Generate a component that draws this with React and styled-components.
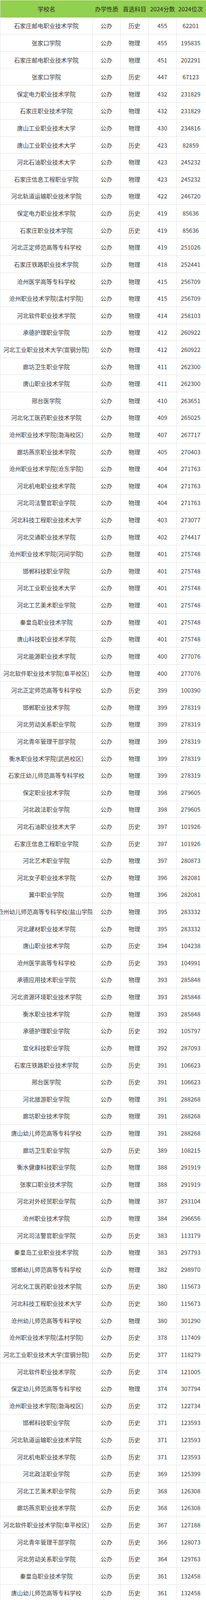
import React from 'react';
import styled, { createGlobalStyle } from 'styled-components';

const GlobalStyle = createGlobalStyle`
  html, body {
    margin: 0;
    padding: 0;
    background: #fff;
  }
  body {
    font-family: "Noto Sans CJK SC", "Microsoft YaHei", "Noto Sans", sans-serif;
    color: #333;
  }
`;

// 学校名|首选科目|分数|位次  (办学性质 均为公办)
const rows = `石家庄邮电职业技术学院|历史|455|62201
张家口学院|物理|455|195835
石家庄邮电职业技术学院|物理|451|202291
张家口学院|历史|447|67123
保定电力职业技术学院|物理|432|231829
石家庄职业技术学院|物理|432|231829
唐山工业职业技术大学|物理|430|234816
唐山工业职业技术大学|历史|423|82859
河北石油职业技术大学|物理|423|245232
石家庄信息工程职业学院|物理|423|245232
河北轨道运输职业技术学院|物理|422|246720
保定电力职业技术学院|历史|419|85636
石家庄职业技术学院|历史|419|85636
河北正定师范高等专科学校|物理|419|251026
石家庄铁路职业技术学院|物理|418|252441
沧州医学高等专科学校|物理|415|256709
沧州职业技术学院(孟村学院)|物理|415|256709
河北软件职业技术学院|物理|414|258103
承德护理职业学院|物理|412|260922
河北工业职业技术大学(宣钢分院)|物理|412|260922
廊坊卫生职业学院|物理|411|262300
唐山职业技术学院|物理|411|262300
邢台医学院|物理|410|263651
河北化工医药职业技术学院|物理|409|265025
沧州职业技术学院(渤海校区)|物理|407|267717
廊坊燕京职业技术学院|物理|405|270403
沧州职业技术学院(沧东学院)|物理|404|271763
河北机电职业技术学院|物理|404|271763
河北司法警官职业学院|物理|404|271763
河北科技工程职业技术大学|物理|403|273077
河北交通职业技术学院|物理|402|274417
沧州职业技术学院(河间学院)|物理|401|275748
邯郸科技职业学院|物理|401|275748
河北工业职业技术大学|物理|401|275748
河北工艺美术职业学院|物理|401|275748
秦皇岛职业技术学院|物理|401|275748
唐山科技职业技术学院|物理|401|275748
河北能源职业技术学院|物理|400|277076
河北软件职业技术学院(阜平校区)|物理|400|277076
河北正定师范高等专科学校|历史|399|100390
邯郸职业技术学院|物理|399|278319
河北劳动关系职业学院|物理|399|278319
河北青年管理干部学院|物理|399|278319
衡水职业技术学院(武邑校区)|物理|399|278319
石家庄幼儿师范高等专科学校|物理|399|278319
保定职业技术学院|物理|398|279605
河北政法职业学院|物理|398|279605
河北石油职业技术大学|历史|397|101926
石家庄信息工程职业学院|历史|397|101926
河北艺术职业学院|物理|397|280873
河北女子职业技术学院|物理|396|282081
冀中职业学院|物理|396|282081
沧州幼儿师范高等专科学校(盐山学院)|物理|395|283332
河北建材职业技术学院|物理|395|283332
唐山职业技术学院|历史|394|104238
沧州医学高等专科学校|历史|393|104991
承德应用技术职业学院|物理|393|285848
河北资源环境职业技术学院|物理|393|285848
衡水职业技术学院|物理|393|285848
承德护理职业学院|历史|392|105797
宣化科技职业学院|物理|392|287093
石家庄铁路职业技术学院|历史|391|106623
邢台医学院|历史|391|106623
河北旅游职业学院|物理|391|288268
廊坊职业技术学院|物理|391|288268
唐山幼儿师范高等专科学校|物理|391|288268
廊坊卫生职业学院|历史|389|108215
衡水健康科技职业学院|物理|388|291919
张家口职业技术学院|物理|388|291919
河北对外经贸职业学院|物理|387|293104
沧州职业技术学院|物理|384|296656
河北司法警官职业学院|历史|383|113179
秦皇岛工业职业技术学院|物理|383|297793
邯郸幼儿师范高等专科学校|物理|382|298970
河北化工医药职业技术学院|历史|380|115673
河北科技工程职业技术大学|历史|380|115673
沧州幼儿师范高等专科学校|物理|380|301290
沧州职业技术学院(孟村学院)|历史|378|117409
河北工业职业技术大学(宣钢分院)|历史|377|118279
河北软件职业技术学院|历史|374|121005
保定幼儿师范高等专科学校|物理|374|307794
沧州职业技术学院(渤海校区)|历史|372|122734
邯郸科技职业学院|历史|371|123593
河北轨道运输职业技术学院|历史|371|123593
河北机电职业技术学院|历史|371|123593
河北政法职业学院|历史|369|125399
河北工艺美术职业学院|历史|368|126308
廊坊燕京职业技术学院|历史|368|126308
河北软件职业技术学院(阜平校区)|历史|367|127188
河北青年管理干部学院|历史|366|128073
河北劳动关系职业学院|历史|364|129763
秦皇岛职业技术学院|历史|361|132458
唐山幼儿师范高等专科学校|历史|361|132458`
  .split('\n')
  .map((line) => line.split('|'));

// 行高按 4320 高的设计稿换算到视口高度
const Table = styled.div`
  width: 527px;
  border-left: 1px solid #e2e2e2;
  box-sizing: border-box;
  font-size: 15px;
`;

const Row = styled.div`
  display: grid;
  grid-template-columns: 236px 71.5px 71.5px 71.5px 1fr;
  height: ${({ head }) => (head ? 'calc(100vh * 47 / 4320)' : 'calc(100vh * 46 / 4320)')};
  background: ${({ head }) => (head ? '#92d050' : '#fff')};
  border-top: ${({ head }) => (head ? '1px solid #eeeeee' : 'none')};
  border-bottom: ${({ head }) => (head ? 'none' : '1px solid #e2e2e2')};
  box-sizing: border-box;
`;

const Cell = styled.div`
  display: flex;
  align-items: center;
  justify-content: center;
  overflow: hidden;
  white-space: nowrap;
  box-sizing: border-box;
  padding-right: ${({ last }) => (last ? '3px' : '0')};
  border-right: ${({ head, last }) => (head || last ? 'none' : '1px solid #e2e2e2')};
  color: ${({ head }) => (head ? '#262626' : '#3a3a3a')};
`;

const headers = ['学校名', '办学性质', '首选科目', '2024分数', '2024位次'];

export default function App() {
  return (
    <>
      <GlobalStyle />
      <Table>
        <Row head>
          {headers.map((h, i) => (
            <Cell head last={i === headers.length - 1} key={h}>{h}</Cell>
          ))}
        </Row>
        {rows.map(([name, subject, score, rank], i) => (
          <Row key={i}>
            <Cell>{name}</Cell>
            <Cell>公办</Cell>
            <Cell>{subject}</Cell>
            <Cell>{score}</Cell>
            <Cell last>{rank}</Cell>
          </Row>
        ))}
      </Table>
    </>
  );
}
